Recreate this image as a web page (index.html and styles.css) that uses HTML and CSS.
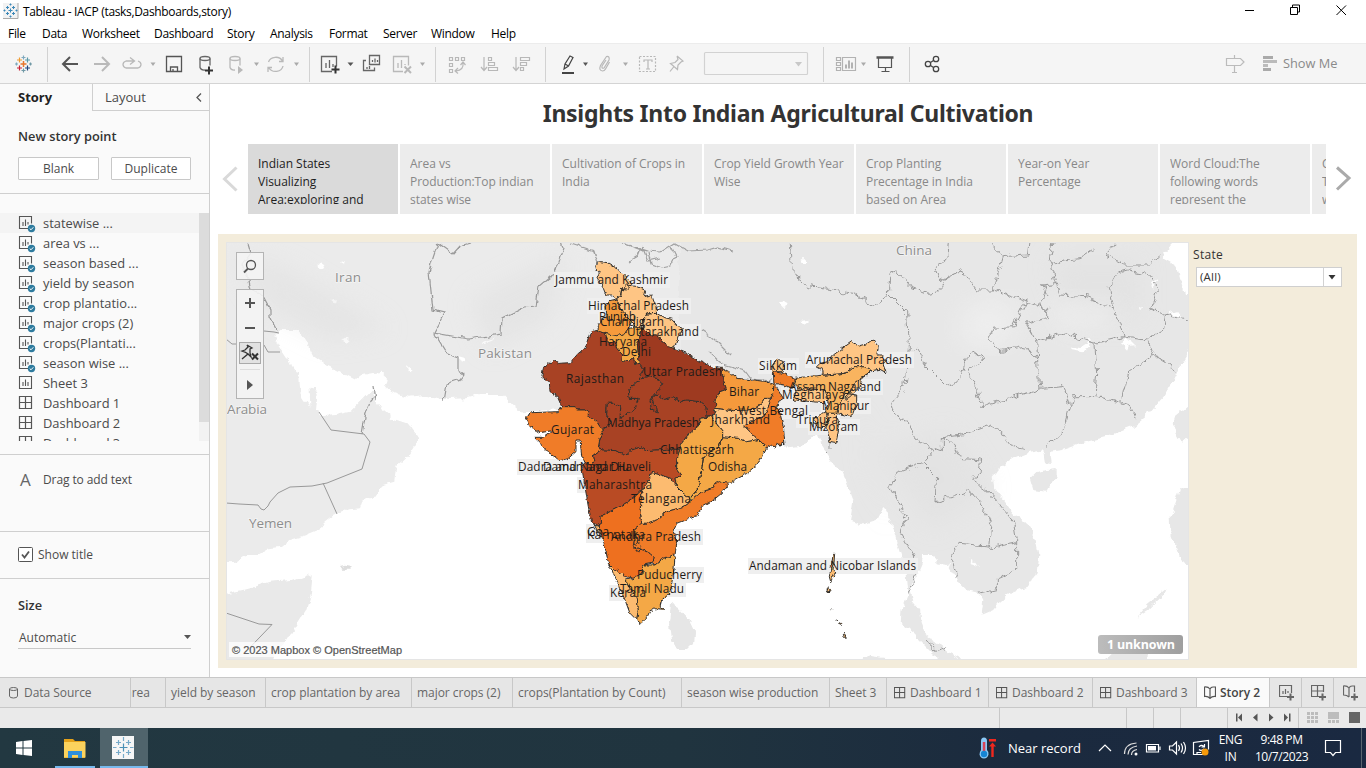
FILE: index.html
```html
<!DOCTYPE html>
<html lang="en">
<head>
<meta charset="utf-8">
<title>Tableau - IACP (tasks,Dashboards,story)</title>
<link rel="stylesheet" href="styles.css">
</head>
<body>
<svg class="defs" width="0" height="0">
  <defs>
    <symbol id="sheet" viewBox="0 0 18 18"><path d="M10 13.500H1.500V1.500h12v7M5 7v4M7.500 4.500v6.500M10 7v2.500" fill="none" stroke="#555" stroke-width="1.1"/></symbol>
    <symbol id="sheetfull" viewBox="0 0 18 18"><path d="M1.500 1.500h12v12h-12zM5 7v4M7.500 4.500v6.500M10 7v4" fill="none" stroke="#555" stroke-width="1.1"/></symbol>
    <symbol id="used" viewBox="0 0 18 18"><use href="#sheet"/><circle cx="13.500" cy="13.500" r="3.700" fill="#2e7b9e"/><path d="M11.700 13.500l1.300 1.300 2.300-2.500" fill="none" stroke="#fff"/></symbol>
    <symbol id="dash" viewBox="0 0 18 18"><path d="M1.500 1.500h12v12h-12zM7.500 1.500v12M1.500 7.500h12" fill="none" stroke="#555" stroke-width="1.2"/></symbol>
  </defs>
</svg>
<div class="app">
  <header class="titlebar">
    <svg class="app-icon" width="16" height="16" viewBox="0 0 16 16"><path d="M0 0h15v15H0z" fill="#f2f2f2"/><path d="M15 0v15.500H0" fill="none" stroke="#aaa"/><path d="M5.500 7.500h4M7.500 5.500v4M3 4.500h3M4.500 3v3M9 4.500h3M10.500 3v3M3 10.500h3M4.500 9v3M9 10.500h3M10.500 9v3M6.500 1.500h2M7.500.5v2M6.500 13.500h2M7.500 12.500v2M.5 7.500h2M1.500 6.500v2M12.500 7.500h2M13.500 6.500v2" stroke="#3c88b8"/></svg>
    <span class="win-title">Tableau - IACP (tasks,Dashboards,story)</span>
    <svg class="win-controls" width="122" height="20" viewBox="1244 0 122 20" fill="none" stroke="#000"><path d="M1245 10.500h9M1290.500 7.500h7v7h-7zM1292.500 7v-2h7v7h-2M1336.500 5.500l9.500 9.500M1346 5.500l-9.500 9.500"/></svg>
  </header>
  <nav class="menu">
    <span class="m1">File</span><span class="m2">Data</span><span class="m3">Worksheet</span><span class="m4">Dashboard</span><span class="m5">Story</span><span class="m6">Analysis</span><span class="m7">Format</span><span class="m8">Server</span><span class="m9">Window</span><span>Help</span>
  </nav>
  <div class="toolbar">
    <svg class="tgroup" width="47" height="39" viewBox="0 44 47 39" fill="none" stroke-width="1.200">
      <path d="M20.500 64h6M23.500 61v6" stroke="#e8762d" stroke-width="1.500"/><path d="M17 60h5M19.500 57.500v5" stroke="#ef9c33"/><path d="M25 60h5M27.500 57.500v5" stroke="#5c9aa8"/><path d="M17 68h5M19.500 65.500v5" stroke="#c72035"/><path d="M25 68h5M27.500 65.500v5" stroke="#1f447e"/><path d="M21.500 57.500h4M23.500 55.500v4M15 64h3M16.500 62.500v3" stroke="#7fa9be"/><path d="M21.500 70.500h4M23.500 68.500v4M29 64h3M30.500 62.500v3" stroke="#7099a6"/>
    </svg>
    <svg class="tgroup sep" width="262" height="39" viewBox="47 44 262 39" fill="none" stroke="#b9b9b9" stroke-width="1.300">
      <g stroke="#555" stroke-width="2"><path d="M78 64H63M70 57l-7 7 7 7"/></g>
      <path stroke-width="2" d="M94 64h15M102 57l7 7-7 7"/>
      <path d="M134 61h-8q-3 1-3 3.500t3 3.500h12q3-1 3-3.500t-3-3.500M130 57.500l4.500 3.500-4.500 3.500"/>
      <path d="M166.500 56.500h15v15h-15zM170.500 71v-4h7v4M173 71v-2" stroke="#555"/>
      <g stroke="#666"><ellipse cx="205" cy="58.500" rx="5" ry="2"/><path d="M200 58.500v9q1 3 5 2.500M210 58.500v7"/></g><path d="M205 70.500h8M209 66.500v8" stroke="#333" stroke-width="2"/>
      <ellipse cx="235" cy="58.500" rx="5" ry="2"/><path d="M230 58.500v9q1 3 5 2.500M240 58.500v7"/><path d="M238 66l5 4-5 4z" fill="#b9b9b9" stroke="none"/>
      <path d="M268.500 62a7.500 6.500 0 0 1 14-1M283 66a7.500 6.500 0 0 1-14 2M283 57v4.500h-4M268 72v-4.500h4"/>
      <g fill="#aaa" stroke="none"><path d="M150.500 62.500h5l-2.500 3.500zM254 62.500h5l-2.500 3.500zM294 62.500h5l-2.500 3.500z"/></g>
    </svg>
    <svg class="tgroup sep" width="126" height="39" viewBox="309 44 126 39" fill="none" stroke="#666" stroke-width="1.300">
      <path d="M332 71.500h-10.500v-15h15v10M326 63v5M329.500 60v8M333 64v3"/><path d="M331.500 69.500h8M335.500 65.500v8" stroke="#333" stroke-width="2"/><path d="M347.500 62.500h6l-3 3.500z" fill="#555" stroke="none"/>
      <path d="M369.500 55.500h10v9h-10zM366 60.500h-2.500v10h11v-3M372.500 60v2M375 58.500v4M377.500 60v2M367 67v2M369.500 66v3"/>
      <g stroke="#b9b9b9"><path d="M403 71.500h-9.500v-15h15v9M398 63v5M401.500 60v8M405 64v1"/><path d="M404.500 66.500l6.500 6.500M411 66.500l-6.500 6.500" stroke-width="2"/></g><path d="M420 62.500h5l-2.500 3.500z" fill="#aaa" stroke="none"/>
    </svg>
    <svg class="tgroup sep" width="110" height="39" viewBox="435 44 110 39" fill="none" stroke="#b8b8b8" stroke-width="1.200">
      <path d="M449.500 57.500h3v3h-3zM455.500 57.500h3v3h-3zM461.500 57.500h3v3h-3zM449.500 63.500h3v3h-3zM449.500 69.500h3v3h-3zM463 63q1 7-7 8M460.500 65l2.500-3 2.500 3M458 68l-3 3 3 2.500"/>
      <path d="M484 57v12.500M481 67l3 3.500 3-3.500M488.500 57.500h3v3h-3zM488.500 62.500h6v3h-6zM488.500 67.500h9v3h-9z"/>
      <path d="M516 57v12.500M513 67l3 3.500 3-3.500M520.500 57.500h9v3h-9zM520.500 62.500h6v3h-6zM520.500 67.500h3v3h-3z"/>
    </svg>
    <svg class="tgroup sep" width="278" height="39" viewBox="545 44 278 39" fill="none" stroke="#b8b8b8" stroke-width="1.200">
      <g stroke="#444"><path d="M564 69l1-5 5-8 3 1.500-4.500 8.500zM565 64l3.500 2"/><path d="M562 73h12" stroke-width="2"/></g><path d="M583 62.500h5l-2.500 3.500z" fill="#555" stroke="none"/>
      <path d="M606 60l-4 6q-.5 3 2 2l5-8q1-4-2.500-3.500l-6 9q-2 5 2 5.500 2 0 3-2l4-7"/><path d="M623 62.500h5l-2.500 3.500z" fill="#aaa" stroke="none"/>
      <path d="M639.500 56.500h16v15h-16z" stroke-dasharray="2 1.500"/><path d="M644 62v-2h8v2M648 60v9M646 69h4"/>
      <path d="M677 56l6 5-2 1-3 3-.5 4.500-3.500-3-4 5M674 66.500l-3.500-3 4.500-1 3-3-1-3.500"/>
      <rect x="704.500" y="52.500" width="103" height="22" rx="1" stroke="#d2d2d2"/><path d="M795 62h7l-3.500 4.500z" fill="#c8c8c8" stroke="none"/>
    </svg>
    <svg class="tgroup sep" width="86" height="39" viewBox="823 44 86 39" fill="none" stroke="#b2b2b2" stroke-width="1.200">
      <path d="M836.500 57.500h4v3h-4zM836.500 62.500h4v3h-4zM836.500 67.500h4v3h-4zM842.500 57.500h13v13h-13z"/><path d="M846 68.500v-4M849 68.500v-8M852 68.500v-6" stroke-width="2"/><path d="M861 62.500h5l-2.500 3.500z" fill="#aaa" stroke="none"/>
      <g stroke="#555"><path d="M876.500 57.500h17" stroke-width="2.500"/><path d="M878.500 58v9.500h13V58M885.500 67.500v4M881.500 71.500h8"/></g>
    </svg>
    <svg class="tgroup sep share" width="40" height="39" viewBox="909 44 40 39" fill="none" stroke="#444" stroke-width="1.300"><circle cx="928" cy="64" r="2.700"/><circle cx="936" cy="59" r="2.700"/><circle cx="936" cy="69" r="2.700"/><path d="M930.500 62.500l3-2M930.500 65.500l3 2"/></svg>
    <svg class="showicon" width="56" height="39" viewBox="1224 44 56 39" fill="none" stroke="#bbb" stroke-width="1.200"><path d="M1226.500 58.500h14l3.500 3.500-3.500 3.500h-14zM1234.500 55v3M1234.500 65.500v7M1232 72.500h5"/><g stroke="#aaa" stroke-width="3"><path d="M1263 57.500h10M1263 69.500h8"/><path stroke="#bbb" d="M1263 61.500h14M1263 65.500h5"/></g></svg>
    <span class="showme">Show Me</span>
  </div>
  <main class="work">
    <aside class="side">
      <div class="side-tabs"><b>Story</b><div class="layout-tab"><span>Layout</span><svg width="6" height="9" viewBox="0 0 6 9"><path d="M5 .5L1 4.500l4 4" fill="none" stroke="#555" stroke-width="1.300"/></svg></div></div>
      <section class="points"><h3>New story point</h3><div class="btns"><div class="btn">Blank</div><div class="btn">Duplicate</div></div></section>
      <section class="list">
        <div class="rows">
          <div class="row active"><svg><use href="#used"/></svg>statewise ...</div>
          <div class="row"><svg><use href="#used"/></svg>area vs ...</div>
          <div class="row"><svg><use href="#used"/></svg>season based ...</div>
          <div class="row"><svg><use href="#used"/></svg>yield by season</div>
          <div class="row"><svg><use href="#used"/></svg>crop plantatio...</div>
          <div class="row"><svg><use href="#used"/></svg>major crops (2)</div>
          <div class="row"><svg><use href="#used"/></svg>crops(Plantati...</div>
          <div class="row"><svg><use href="#used"/></svg>season wise ...</div>
          <div class="row"><svg><use href="#sheetfull"/></svg>Sheet 3</div>
          <div class="row"><svg><use href="#dash"/></svg>Dashboard 1</div>
          <div class="row"><svg><use href="#dash"/></svg>Dashboard 2</div>
          <div class="row"><svg><use href="#dash"/></svg>Dashboard 3</div>
        </div>
        <div class="scroll"><div class="thumb"></div></div>
      </section>
      <section class="drag"><span class="bigA">A</span><span>Drag to add text</span></section>
      <section class="show"><svg width="15" height="15" viewBox="0 0 15 15"><rect x=".5" y=".5" width="14" height="14" rx="1" fill="#fff" stroke="#555"/><path d="M4 7.500l2.500 3L11 4.500" fill="none" stroke="#555" stroke-width="1.800"/></svg><span>Show title</span></section>
      <section class="size"><h3>Size</h3><div class="select"><span>Automatic</span><svg width="7" height="4" viewBox="0 0 7 4"><path d="M0 0h7L3.500 4z" fill="#555"/></svg></div></section>
    </aside>
    <section class="story">
      <h1>Insights Into Indian Agricultural Cultivation</h1>
      <div class="nav">
        <svg class="prev" width="38" height="70" viewBox="210 144 38 70"><path d="M236.500 167.500l-12 11.500 12 11.500" fill="none" stroke="#d9d9d9" stroke-width="3"/></svg>
        <div class="cards">
          <div class="card on"><p>Indian States<br>Visualizing<br>Area:exploring and</p></div>
          <div class="card"><p>Area vs<br>Production:Top indian<br>states wise</p></div>
          <div class="card"><p>Cultivation of Crops in<br>India</p></div>
          <div class="card"><p>Crop Yield Growth Year<br>Wise</p></div>
          <div class="card"><p>Crop Planting<br>Precentage in India<br>based on Area</p></div>
          <div class="card"><p>Year-on Year<br>Percentage</p></div>
          <div class="card"><p>Word Cloud:The<br>following words<br>represent the</p></div>
          <div class="card"><p>Crop<br>Top<br>wise</p></div>
        </div>
        <svg class="next" width="40" height="70" viewBox="1326 144 40 70"><path d="M1337 167.500l12 10.500-12 11.500" fill="none" stroke="#aaa" stroke-width="3"/></svg>
      </div>
      <div class="board">
        <div class="map">
          <svg id="map" width="961" height="416" viewBox="227 243 961 416">
            <defs>
              <filter id="rough" x="-5%" y="-5%" width="110%" height="110%" color-interpolation-filters="sRGB"><feTurbulence type="fractalNoise" baseFrequency=".12" numOctaves="3" seed="4"/><feDisplacementMap in="SourceGraphic" scale="7" xChannelSelector="R" yChannelSelector="G"/></filter>
              <filter id="edge" x="-5%" y="-5%" width="110%" height="110%" color-interpolation-filters="sRGB"><feTurbulence type="fractalNoise" baseFrequency=".12" numOctaves="2" seed="9"/><feDisplacementMap in="SourceGraphic" scale="6" xChannelSelector="R" yChannelSelector="G"/></filter>
              <filter id="winding" x="-5%" y="-5%" width="110%" height="110%" color-interpolation-filters="sRGB"><feTurbulence type="fractalNoise" baseFrequency=".045" numOctaves="2" seed="9"/><feDisplacementMap in="SourceGraphic" scale="28" xChannelSelector="R" yChannelSelector="G"/></filter>
              <filter id="jagged" x="-5%" y="-5%" width="110%" height="110%" color-interpolation-filters="sRGB"><feTurbulence type="fractalNoise" baseFrequency=".08" numOctaves="2" seed="5"/><feDisplacementMap in="SourceGraphic" scale="13" xChannelSelector="R" yChannelSelector="G"/></filter>
              <filter id="soft"><feGaussianBlur stdDeviation="12"/></filter>
              <linearGradient id="badge"><stop stop-color="#bcbcbc"/><stop offset="1" stop-color="#9f9f9f"/></linearGradient>
            </defs>
            <path d="M227 243h961v416H227z" fill="#fff"/>
            <g filter="url(#rough)">
              <g transform="translate(226 240) scale(.33333)" fill="#ebebeb">
                <path d="M-30-30V970L30 965 60 945 95 945 130 925 165 920 190 900 240 885 290 865 298 845 320 828 370 808 405 805 415 775 455 765 470 735 505 725 510 680 530 665 550 645 580 595 545 550 500 535 470 510 450 480 440 450 425 465 400 490 375 515 330 525 290 528 270 510 275 460 262 442 248 450 250 500 235 480 222 445 220 410 190 365 160 320 145 290 160 270 215 270 240 300 265 350 300 375 350 400 390 420 410 405 465 395 485 415 480 435 495 455 545 470 600 465 650 478 720 475 760 465 830 465 860 495 890 520 1000 510 1300 600H1660V-30z"/>
                <path d="M-10 1062L50 1050 70 1045 130 1025 200 1020 245 1003 260 1012 255 1060 240 1110 215 1150 185 1200 150 1235 130 1290H-10z" fill="#e9e9e9"/>
                <path d="M342 978l15-4 21 4-8 8-22 0z" fill="#ddd"/>
                <path d="M275 70l10-6 12 8-8 14-14-4zM345 70l14-4-2 10zM316 180l10-4-2 12zM345 297l14-4 12 12-8 2zM540 380l14-3 2 14-10 4zM695 345l22 6-4 10-12-3zM765 310l40-18-10 12-28 8z" fill="#fff"/>
              </g>
              <g transform="translate(780 240) scale(.33333)" fill="#e7e7e7">
                <path d="M-300-30V560L15 620 60 615 95 600 110 585 120 610 140 640 160 670 190 700 205 740 220 780 210 845 240 855 290 840 310 800 330 840 345 890 360 940 380 1000 385 1060 365 1110 362 1150 400 1180 430 1210 470 1250 480 1280H545L545 1258 510 1240 480 1215 440 1190 425 1150 420 1110 395 1080 390 1050 412 1000 425 970 430 945 460 945 470 970 505 975 520 1000 540 1030 560 1050 600 1060 610 1080 605 1125 640 1110 660 1085 690 1060 740 1040 770 1000 775 940 765 890 740 850 700 820 670 780 640 740 635 710 660 680 700 655 740 640 790 630 795 670 815 672 810 635 850 630 920 605 980 590 1060 560 1110 520 1150 470 1180 420 1195 390 1220 350 1240 290V165H1215L1200 115 1190 80 1145 55 1180 10 1190-30z"/>
                <path d="M750 715L770 695 830 687 830 715 800 755 760 750zM1180 560L1185 530 1240 485V590L1205 605zM1175 890L1172 830 1200 745H1240V985L1200 960zM1070 1130L1100 1095 1160 1045 1155 1060 1110 1105zM950 1290L1030 1205 1060 1195 1100 1200V1290zM245 1270L250 1245 320 1255 350 1290z"/>
                <path d="M0 190l18-4 8 8-16 10zM62 240l24-4-8 12-14 4zM62 58h16v8H64zM870 320l34 4 20-12-8-18 16 10 2 18-24 12-34-6zM1020 310l20-20 26 26-20 2-6 14-10-14zM1115 125l12-10 2 18-10 10zM1070 205l20-4-6 10zM1172 220l18-6 10 14-14 4zM565 955l22 14 10 14-14-6z" fill="#fff"/>
              </g>
              <path d="M671 603L678 607 688 618 695 633 694 643 687 650 677 650 671 640 669 623z" fill="#e6e6e6"/>
            </g>
            <g fill="#dfdfdf" opacity=".5" filter="url(#soft)"><path d="M1050 260h90v60h-70zM880 450l70-20 40 60-60 40zM860 390l20 100 10 40-20-60zM470 300l60-30 40-20-20 70-60 30zM230 250l60 20 100 60-60 10-60-30z"/></g>
            <g fill="#f4f4f4" opacity=".5" filter="url(#soft)"><path d="M960 310l40-15 20 25-20 30-40-5zM1050 300l70 5-10 20-50 5z"/></g>
            <g fill="none" stroke="#999" stroke-width="1">
              <path d="M226 503l13 1 19 1 3 4 3 1 4-4 2-4 8-9 12-6 22-1 15-3 35-14 8-27-6-8-33-4-12-18M323 483l14 31M226 613l33 11 13 .5-24 25M226 339l6 5h5M264 331l10 1 5 1M264 345l4 7h12"/>
              <g filter="url(#edge)" stroke-width="1.200"><path d="M248 243l3 10-9 12 7 16 2 9 12 6 7 13v8l7 14M438 243l-5 15-4 14 4 38 12 3-11 20 34 6 33-5 1-16 22-11 12-1 3-20 12-10 7-13 5-15-4-15M434 334l11 18 13 5v14l6 4-3 4-15 5-3 17M438 243l15 11 7-8 10-3M374 386l2 14M362 434l3-17 5-16 6-6"/>
              <path d="M622 243l22 8 4 10 12-3M622 243l25 8 13 1 14-9 14 8 20-1 10-3 14 4M648 252l3 12 11 4 9-2 5-10-5-10M709 352l14 13 22 6 6 8 20 2M701 330l12 8 18 18M570 243l24 8 4 14-3 4M628 262l10-6 4-10" stroke="#a0a0a0"/></g>
            </g>
            <g transform="translate(780 240) scale(.33333)" fill="none" stroke="#999" stroke-width="3" filter="url(#winding)">
              <path d="M30 0L40 100 90 140 220 160 280 200 325 160 380 215 385 320 375 440 335 490 345 525 380 540 405 600 465 630 490 635 490 590 560 580 630 555 660 570 690 615 730 625M325 160L330 100 350 90 390 140 440 160 480 155 500 110 545 90 590 150 640 150 670 50 625 5M640 150L720 175 800 205 800 235 740 250 770 300 775 400 780 445 690 475 605 500 590 440 565 390 615 360 580 335 560 350 545 400 530 430 500 440 440 380 410 325 390 330M740 180L700 260 640 265 625 295 660 335 720 320 770 350M670 50L745 45 750 5M820 0L810 70 840 165 920 170 1000 205 1025 270 1030 290 945 310 860 280 770 300M810 70L900 55 935 30M1000 205L985 145 1010 100 1045 90 1110 105 1135 150 1115 210 1155 225 1225 240M945 310L950 400 945 470 880 470 870 500 850 440 780 445M870 500L850 575 795 625M1025 290L1100 300 1120 345 1045 400 1025 490 945 470M1025 490L1050 500 1070 545M1120 345L1190 390M1100 300L1150 270 1160 225M1035 75L1110 75 1145 45M1035 75L980 45 1010 0M465 630L430 670 350 700 330 745 380 835 360 880 400 950 410 1010 380 1060M490 590L525 620 540 655 605 660 600 700 575 715 640 770 700 845 710 905 640 920 540 910 515 945 535 1015M430 670L470 710 465 785 520 770 570 755 605 790 635 860 630 915M710 905L710 990 655 1015 655 1045 595 1060M430 1200L470 1230 505 1220M150 570L150 630 135 645M505 0L500 60 465 85 480 125 545 90M785 135L800 140 785 200M785 135L840 130"/>
            </g>
            <g id="plates"></g>
            <g id="states" transform="translate(500 240) scale(.33333)" stroke="#33302c" stroke-width="3" stroke-linejoin="round" filter="url(#jagged)">
              <path fill="#fec584" d="M287 77L300 65 322 68 345 82 365 98 385 115 395 133 380 150 365 148 362 165 350 177 335 165 318 165 310 145 298 125 290 110 300 97 290 90zM365 148L380 135 410 140 435 150 430 170 455 165 460 180 468 200 470 220 440 222 432 240 425 262 410 260 395 245 375 225 360 205 350 177 362 165zM432 240L440 222 470 220 490 232 515 238 530 255 550 265 535 290 522 325 505 320 480 300 470 285 450 285 430 265z"/>
              <path fill="#f59a3c" d="M350 177L360 205 375 225 395 245 385 265 375 280 350 287 315 280 288 272 300 250 318 230 315 200 330 182z"/>
              <path fill="#f4a846" d="M315 280L350 287 375 280 385 265 410 262 425 262 418 290 412 310 415 340 418 370 405 372 400 355 385 365 365 362 368 345 350 325 345 305 325 305z"/>
              <path fill="#a84224" d="M270 278L288 272 315 280 325 305 345 305 350 325 368 345 365 362 385 365 400 355 405 372 418 370 428 388 422 402 430 412 405 430 385 455 388 475 415 475 405 510 385 520 360 535 362 500 345 490 322 490 320 525 335 545 318 560 305 568 290 545 265 525 262 510 230 510 225 500 185 500 170 465 150 455 148 425 125 412 130 385 160 360 175 370 210 368 235 340 255 325z"/>
              <path fill="#a84224" d="M430 412L450 408 470 412 485 430 480 445 465 460 450 480 455 510 472 518 470 505 460 490 455 470 475 465 490 478 520 470 540 485 560 480 600 485 618 500 622 530 600 535 598 555 575 575 560 590 545 610 540 628 500 628 440 632 420 622 395 630 380 645 345 632 310 630 295 622 300 595 308 580 305 568 318 560 335 545 320 525 322 490 345 490 362 500 360 535 385 520 405 510 415 475 388 475 385 455 405 430z"/>
              <path fill="#9e3a20" d="M425 262L430 265 450 285 470 285 480 300 505 320 522 325 560 340 600 365 640 382 665 385 670 420 680 448 660 455 645 480 648 505 635 530 622 530 618 500 600 485 560 480 540 485 520 470 490 478 475 465 455 470 460 490 470 505 472 518 455 510 450 480 465 460 480 445 485 430 470 412 450 408 430 412 422 402 428 388 418 370 415 340 412 310 418 290z"/>
              <path fill="#f07c28" d="M75 532L95 518 175 515 185 500 225 500 230 510 262 510 265 525 290 545 305 568 308 580 300 595 295 622 300 632 280 645 285 665 270 672 255 668 245 645 240 600 228 600 228 635 205 655 180 662 150 640 120 610 103 592 130 592 158 572 120 578 90 560z"/>
              <path fill="#b94b24" d="M295 622L310 630 345 632 380 645 395 630 420 622 440 632 500 628 540 628 530 660 530 685 545 705 525 715 530 740 512 715 480 705 455 697 445 725 425 750 400 775 360 800 330 815 303 828 305 850 292 857 275 845 265 800 255 740 245 680 255 668 270 672 285 665 280 645 300 632z"/>
              <path fill="#fcbb70" d="M455 697L480 705 512 715 530 740 550 760 575 780 560 795 535 805 500 815 470 840 440 850 425 850 420 810 425 780 425 750 445 725zM325 970L340 985 380 1010 378 1020 390 1045 412 1075 415 1110 410 1140 390 1120 375 1080 350 1020zM283 855L298 860 302 882 292 872z"/>
              <path fill="#ee701f" d="M303 828L330 815 360 800 400 775 425 750 425 780 420 810 425 850 405 865 405 890 400 920 430 930 450 940 465 955 455 970 430 975 425 1000 400 1015 380 1010 340 985 325 970 318 930 302 882 298 860 292 857 305 850z"/>
              <path fill="#f07c28" d="M405 865L425 850 440 850 470 840 500 815 535 805 560 795 575 780 605 755 640 745 650 725 690 725 665 760 640 780 605 800 590 830 560 838 530 850 520 875 530 910 525 945 490 955 465 975 455 970 465 955 450 940 430 930 400 920 405 890z"/>
              <path fill="none" d="M402 915l12-8 8 12-6 16-14-8zM404 890l10 4-2 12"/>
              <path fill="#f4a846" d="M525 945L522 990 510 1060 485 1080 480 1100 494 1108 468 1106 450 1112 440 1135 422 1150 410 1140 415 1110 412 1075 390 1045 378 1020 400 1015 425 1000 430 975 465 975 490 955zM598 555L600 535 635 530 645 545 668 575 668 590 655 625 630 635 610 655 605 690 600 710 595 745 570 775 550 760 530 740 525 715 545 705 530 685 530 660 540 628 545 610 560 590 575 575zM668 590L690 592 715 595 740 605 775 598 800 622 780 660 770 675 740 700 690 730 650 725 640 745 605 755 575 780 570 775 595 745 600 710 605 690 610 655 630 635 655 625z"/>
              <path fill="#fec584" d="M648 505L670 508 700 512 740 510 760 508 785 490 795 475 812 480 805 505 790 530 755 545 735 560 765 590 775 598 740 605 715 595 690 592 668 590 668 575 645 545 635 530zM820 370L835 358 850 365 850 395 818 395z"/>
              <path fill="#f59a3c" d="M665 385L690 398 710 415 760 420 800 425 822 435 825 455 812 475 795 475 785 490 760 508 700 512 670 508 648 505 645 480 660 455 680 448 670 420z"/>
              <path fill="#f07c28" d="M820 395L850 400 885 415 885 430 880 445 850 435 825 430 835 450 850 475 835 485 830 500 840 520 850 560 855 615 845 605 840 622 832 608 825 625 820 615 800 622 775 598 765 590 735 560 755 545 790 530 805 505 812 475 820 455 822 435z"/>
              <path fill="#f9b45f" d="M885 415L920 410 1000 403 1035 400 1060 380 1095 380 1115 392 1090 410 1065 430 1050 455 1035 480 1010 520 975 520 985 490 975 450 930 447 890 447z"/>
              <path fill="#fec584" d="M890 447L930 447 975 450 985 478 970 488 880 480zM950 380L960 370 985 365 1000 345 1055 305 1075 318 1105 310 1120 300 1135 320 1130 345 1145 345 1160 365 1150 375 1158 398 1140 388 1115 392 1095 380 1060 380 1035 400 1000 403 970 405 968 390zM1065 430L1090 410 1115 392 1085 415 1080 440 1060 460 1050 470 1035 480zM1035 460L1070 465 1070 490 1055 530 1010 520 1015 500zM985 520L1010 520 1018 560 1008 608 990 605 980 560zM940 540L965 520 978 515 985 545 965 565 950 560z"/>
              <path fill="#fcbb70" d="M1000 940l4 0-3 40 3 20-12 25-4-15 6-30zM981 1046l6-2 3 8-7 4zM993 1107h2v2h-2zM1008 1140h2v2h-2zM1018 1152l8-4-1 8zM1030 1180l6 4 2 12-6-6z"/>
            </g>
            <g class="country"><text x="335" y="282" textLength="26">Iran</text><text x="478" y="358" textLength="54">Pakistan</text><text x="227" y="414" textLength="40">Arabia</text><text x="249" y="528" textLength="43">Yemen</text><text x="896" y="255" textLength="36">China</text></g>
            <g id="labels"></g>
            <rect x="229" y="642" width="176" height="15" fill="#fff" opacity=".75"/><text class="attrib" x="232" y="654" textLength="170">© 2023 Mapbox © OpenStreetMap</text>
            <rect x="1098" y="635" width="85" height="19" rx="3" fill="url(#badge)"/><text class="unknown" x="1107" y="649" textLength="68">1 unknown</text>
          </svg>
          <svg class="controls" width="28" height="147" viewBox="236 252 28 147" fill="none"><rect x="236.500" y="252.500" width="27" height="27" fill="#f4f4f4" fill-opacity=".9" stroke="#b4b4b4"/><circle cx="251" cy="265" r="4.500" stroke="#555" stroke-width="1.300"/><path d="M248 268.500l-4 4" stroke="#555" stroke-width="1.800"/><rect x="236.500" y="289.500" width="27" height="109" fill="#f4f4f4" fill-opacity=".9" stroke="#b4b4b4"/><path d="M245 303h10M250 298v10M245 328h10" stroke="#555" stroke-width="2"/><rect x="239.500" y="342.500" width="21" height="21" fill="#e2e2e2" stroke="#aaa"/><path d="M247 345l5 3-2 1v4l1 4-3-3-6 5M247 353l-5-2 3-1 3-3-1-2M248 354l-3-2" stroke="#333" stroke-width="1.300"/><path d="M252 353.500l6 6M258 353.500l-6 6" stroke="#333" stroke-width="2"/><path d="M240 369.500h20" stroke="#ddd"/><path d="M247 380v10l6-5z" fill="#555"/></svg>
        </div>
        <div class="filter"><span>State</span><div class="combo"><span>(All)</span><svg width="18" height="18" viewBox="0 0 18 18"><path d="M.5 0v18" stroke="#d2d2d2"/><path d="M5.500 7h7L9 11.500z" fill="#333"/></svg></div></div>
      </div>
    </section>
  </main>
  <div class="sheets">
    <div class="tab ds"><svg width="9" height="12" viewBox="0 0 9 12"><path d="M.5 2v7q0 2 4 2t4-2V2q0-1.500-4-1.500T.5 2zM.5 2q0 1.500 4 1.500t4-1.500" fill="none" stroke="#666"/></svg><span>Data Source</span></div>
    <div class="tab cut"><span>area</span></div>
    <div class="tab t1"><span>yield by season</span></div><div class="tab t2"><span>crop plantation by area</span></div><div class="tab t3"><span>major crops (2)</span></div><div class="tab t4"><span>crops(Plantation by Count)</span></div><div class="tab t5"><span>season wise production</span></div><div class="tab t6"><span>Sheet 3</span></div>
    <div class="tab d1"><svg class="dsh" viewBox="1 1 14 14"><use href="#dash" width="18" height="18"/></svg><span>Dashboard 1</span></div><div class="tab d2"><svg class="dsh" viewBox="1 1 14 14"><use href="#dash" width="18" height="18"/></svg><span>Dashboard 2</span></div><div class="tab d2"><svg class="dsh" viewBox="1 1 14 14"><use href="#dash" width="18" height="18"/></svg><span>Dashboard 3</span></div>
    <div class="tab st"><svg width="12" height="13" viewBox="0 0 12 13"><path d="M6 3v9.500M6 3Q4 .5.500 1v9.500Q4 10 6 12.500 8 10 11.500 10.500V1H9M6 3q1-2 3-2" fill="none" stroke="#555" stroke-width="1.200"/></svg><span>Story 2</span></div>
    <div class="tab add"><svg width="16" height="16" viewBox="0 0 16 16" fill="none" stroke="#666" stroke-width="1.200"><path d="M9 11.500H.5v-11h12V8M4 6v3M6.500 4v5M9 6v2"/><path d="M8 12h7M11.500 8.500v7" stroke-width="2"/></svg></div>
    <div class="tab add"><svg width="16" height="16" viewBox="0 0 16 16" fill="none" stroke="#666" stroke-width="1.200"><path d="M8 11.500H.5v-11h12V7M6.500.5v11M.5 6h12"/><path d="M8 12h7M11.500 8.500v7" stroke-width="2"/></svg></div>
    <div class="tab add"><svg width="16" height="16" viewBox="0 0 16 16" fill="none" stroke="#666" stroke-width="1.200"><path d="M6 3v9M6 3Q4 .5.500 1v9Q4 10 6 12M11.500 7V1H9Q7 1 6 3"/><path d="M8 12h7M11.500 8.500v7" stroke-width="2"/></svg></div>
  </div>
  <div class="status"><svg width="367" height="20" viewBox="999 708 367 20"><path d="M999.500 708v20M1126.500 708v20M1153.500 708v20M1180.500 708v20M1227.500 708v20M1298.500 708v20" stroke="#c8c8c8"/><path d="M1236 713.500h1.500v8h-1.500zM1242 713.500v8l-4-4zM1257.500 713.500v8l-4.500-4zM1269 713.500v8l4.500-4zM1284 713.500v8l4-4zM1289 713.500h1.500v8H1289z" fill="#555"/><path d="M1307 712h3v3h-3zM1311 712h3v3h-3zM1315 712h3v3h-3zM1307 716h3v3h-3zM1311 716h3v3h-3zM1315 716h3v3h-3zM1307 720h3v3h-3zM1311 720h3v3h-3zM1315 720h3v3h-3zM1328 712h11v7h-11zM1328 720h3v3h-3zM1332 720h3v3h-3zM1336 720h3v3h-3z" fill="#bcbcbc"/><path d="M1349 712h11v11h-11z" fill="#666"/></svg></div>
  <footer class="taskbar">
    <svg width="148" height="40" viewBox="0 728 148 40"><path d="M16 742l6.500-1v6.500H16zM23.500 741l8.500-1v7.500h-8.500zM16 748.500h6.500v6.500L16 754zM23.500 748.500H32v7.500l-8.500-1z" fill="#fff"/><path d="M64 739h9l2 2h10v17H64z" fill="#e5a21a"/><path d="M64 742h21.500v15.500H64z" fill="#fbd25d"/><path d="M68 758v-7h14v7h-4v-3h-6v3z" fill="#2f8fdc"/><path d="M100 728h48v40h-48z" fill="#50646c"/><path d="M112 736h22v23h-22z" fill="#f6f6f6"/><g stroke="#4b91b6" stroke-width="1.200"><path d="M119.500 747.500h8M123.500 743.500v8"/><path stroke="#76aac9" d="M116 742.500h5M118.500 740v5M126 742.500h5M128.500 740v5M116 752.500h5M118.500 750v5M126 752.500h5M128.500 750v5M123.500 737v4M123.500 754v4M113 747.500h3.500M130 747.500h3.500"/></g><path d="M55 766h40v2H55zM100 766h48v2h-48z" fill="#76b9ed"/></svg>
    <div class="weather"><svg width="20" height="24" viewBox="980 736 20 24"><path d="M982 741q0-3.500 3-3.500t3 3.500v9q2 2 1.500 4.500-1 4-4.500 4t-4.500-4q0-2.500 1.500-4.500z" fill="#8cc8f5"/><path d="M983.800 742h2.500v9h-2.500z" fill="#d94458"/><circle cx="985" cy="754" r="3.200" fill="#1684d4"/><path d="M990 739h7v2.500h-7zM990 746.500l3.500-4 3.500 4h-2.300V757h-2.400v-10.500z" fill="#f0281e"/></svg><span>Near record</span></div>
    <svg class="tray" width="114" height="24" viewBox="1098 736 114 24" fill="none" stroke="#fff" stroke-width="1.200"><path d="M1099 751l6-6 6 6"/><path d="M1124.500 754q0-10 12-11M1128 754.500q0-7 9-8.500M1131.500 755q0-4.500 5.500-5.500" stroke="#ddd"/><circle cx="1136" cy="754" r="1.500" fill="#fff" stroke="none"/><path d="M1146.500 744.500h12v7.500h-12zM1160 746.500v3.500"/><path d="M1148 746h8v4.500h-8z" fill="#fff" stroke="none"/><path d="M1169.500 746h3l4-4v12l-4-4h-3zM1178.500 745q2 3 0 6M1181 743.500q3 4.500 0 9M1183.500 742q4 6 0 12"/><path d="M1203 754.500h-9.500v-12l15-2v9M1197 755v-2.500h4M1199 747q2-3 5-.5M1204.500 744v3h-3M1204 749q-3 2.500-5 .5"/><circle cx="1205" cy="752" r="3.500" fill="#f59a0b" stroke="none"/></svg>
    <div class="stack lang"><span>ENG</span><span>IN</span></div>
    <div class="stack clock"><span>9:48 PM</span><span>10/7/2023</span></div>
    <svg class="note" width="42" height="40" viewBox="1324 728 42 40"><path d="M1325.500 740.500h15v12h-5l-2.500 3-2.500-3h-5z" fill="none" stroke="#fff" stroke-width="1.200"/><path d="M1361.500 728v40" stroke="#59656f"/></svg>
  </footer>
</div>
<script src="labels.js"></script>
</body>
</html>
```
FILE: styles.css
```css
* { box-sizing: border-box; }
body { margin: 0; font-family: "Open Sans", "Noto Sans", sans-serif; font-size: 12px; color: #4b4b4b; overflow: hidden; }
h1, h3, p { margin: 0; }
svg { display: block; flex: none; }
span { white-space: nowrap; }
.defs { position: absolute; }
.app { width: 1366px; height: 768px; display: flex; flex-direction: column; background: #fff; }
.titlebar { height: 22px; display: flex; align-items: center; padding-left: 3px; color: #000; }
.win-title { margin-left: 4px; padding-top: 1px; font-size: 12px; letter-spacing: -.34px; flex: 1; }
.win-controls { align-self: flex-start; }
.menu { height: 21px; padding: 2px 0 0 8px; display: flex; align-items: center; color: #000; font-size: 12px; letter-spacing: -.3px; }
.m1 { width: 34px; } .m2 { width: 40px; } .m3 { width: 72px; } .m4 { width: 73px; } .m5 { width: 43px; } .m6 { width: 59px; } .m7 { width: 54px; } .m8 { width: 48px; } .m9 { width: 60px; }
.toolbar { height: 41px; background: #f5f5f5; border-top: 1px solid #ececec; border-bottom: 1px solid #d4d4d4; display: flex; align-items: center; }
.sep { background: linear-gradient(#d2d2d2, #d2d2d2) no-repeat 0 3px / 1px 35px; }
.showicon { margin-left: auto; }
.showme { width: 86px; padding: 0 0 2px 3px; font-size: 12.8px; color: #8a8a8a; }
.work { height: 593px; display: flex; }
.side { width: 210px; background: #fafafa; border-right: 1px solid #cfcfcf; display: flex; flex-direction: column; }
.side h3 { font-size: 12.8px; font-weight: 600; color: #333; line-height: 18px; }
.side-tabs { height: 27px; display: flex; font-size: 13px; line-height: 26px; }
.side-tabs b { width: 92px; padding-left: 18px; color: #222; }
.layout-tab { flex: 1; display: flex; justify-content: space-between; align-items: center; padding: 0 7px 0 12px; border-left: 1px solid #cfcfcf; border-bottom: 1px solid #cfcfcf; }
.points { height: 83px; padding: 16px 18px 0; border-bottom: 1px solid #cfcfcf; }
.btns { display: flex; gap: 12px; margin-top: 12px; }
.btn { width: 81px; height: 23px; border: 1px solid #c8c8c8; border-radius: 1px; background: #fff; text-align: center; line-height: 21px; font-size: 12px; }
.btns .btn + .btn { width: 80px; }
.list { height: 261px; padding: 19px 0 13px; border-bottom: 1px solid #cfcfcf; display: flex; font-size: 12.9px; }
.rows { width: 199px; overflow: hidden; }
.row { height: 20px; line-height: 20px; padding-left: 18px; display: flex; align-items: center; gap: 7px; white-space: nowrap; }
.row svg { width: 18px; height: 18px; margin-top: 2px; }
.active { background: #f4f4f4; }
.scroll { width: 10px; background: #f2f2f2; }
.thumb { height: 209px; background: #dcdcdc; }
.drag { height: 77px; border-bottom: 1px solid #cfcfcf; display: flex; gap: 13px; padding: 16px 0 0 20px; line-height: 18px; letter-spacing: -.1px; }
.bigA { font-size: 17px; color: #666; width: 10px; }
.show { height: 47px; border-bottom: 1px solid #cfcfcf; display: flex; align-items: center; gap: 5px; padding: 0 0 2px 18px; }
.size { padding: 17px 18px 0; }
.select { margin-top: 12px; height: 23px; border-bottom: 1px solid #c8c8c8; display: flex; align-items: center; justify-content: space-between; padding-left: 1px; }
.story { flex: 1; display: flex; flex-direction: column; min-width: 0; }
.story h1 { height: 60px; line-height: 58px; font-size: 23px; font-weight: 700; font-family: "Noto Sans", sans-serif; color: #333; text-align: center; white-space: nowrap; letter-spacing: -.27px; }
.nav { display: flex; height: 70px; }
.cards { width: 1078px; display: flex; gap: 2px; overflow: hidden; }
.card { flex: none; width: 150px; height: 70px; background: #ececec; color: #888; padding: 11px 0 0 10px; font-size: 12px; }
.card p { line-height: 18px; height: 49px; overflow: hidden; white-space: nowrap; letter-spacing: -.02px; }
.on { background: #dadada; color: #1d1d1d; }
.board { margin: 20px 9px 0 8px; height: 434px; background: #f3ecdb; padding: 8px; display: flex; }
.map { width: 963px; height: 418px; border: 1px solid #e5e5e5; position: relative; }
.controls { position: absolute; left: 9px; top: 9px; }
.filter { padding: 4px 0 0 4px; width: 156px; color: #333; }
.filter > span { display: block; line-height: 18px; letter-spacing: .3px; }
.combo { margin: 3px 0 0 3px; width: 146px; height: 20px; border: 1px solid #cfcfcf; background: #fff; display: flex; justify-content: space-between; padding-left: 3px; line-height: 18px; font-size: 11.5px; letter-spacing: .2px; }
.sheets { height: 31px; border-top: 1px solid #c8c8c8; border-bottom: 1px solid #c8c8c8; background: #e6e6e6; display: flex; color: #666; letter-spacing: -.04px; }
.tab { border-right: 1px solid #c8c8c8; display: flex; align-items: center; padding-left: 5px; flex: none; overflow: hidden; }
.ds { width: 131px; padding-left: 9px; gap: 6px; }
.cut { width: 35px; padding-left: 0; } .cut span { margin-left: -6px; }
.t1 { width: 100px; } .t2 { width: 146px; } .t3 { width: 101px; } .t4 { width: 169px; } .t5 { width: 148px; } .t6 { width: 57px; }
.d1 { width: 102px; padding-left: 7px; } .d2 { width: 104px; padding-left: 7px; }
.dsh { width: 12px; height: 12px; margin-right: 4px; }
.st { width: 73px; padding-left: 7px; gap: 4px; background: #fafafa; font-weight: 600; color: #444; }
.add { width: 32px; padding-left: 9px; } .add:last-child { width: 33px; border: 0; }
.status { height: 20px; background: #eaeaea; display: flex; justify-content: flex-end; }
.taskbar { height: 40px; background: linear-gradient(90deg, #223841, #20343f 50%, #1b2a3e 75%, #1a2941); display: flex; align-items: center; color: #fff; }
.weather { margin-left: 831px; display: flex; align-items: center; gap: 9px; width: 119px; font-size: 13px; }
.stack { display: flex; flex-direction: column; align-items: center; line-height: 17px; font-size: 12px; }
.lang { width: 37px; letter-spacing: -.3px; } .clock { width: 65px; margin-right: 10px; letter-spacing: -.4px; }
#map text { font-family: "Open Sans", "Noto Sans", sans-serif; }
#labels { font-size: 11.8px; fill: #1e1a18; }
#plates { fill: #efefef; }
.country { font-size: 13.5px; fill: #8e8e8e; stroke: #f4f4f4; stroke-width: 1.5px; paint-order: stroke; }
#map .attrib { font: 11px "Liberation Sans", sans-serif; fill: #555; stroke: #555; stroke-width: .2px; }
.unknown { font-size: 12.5px; font-weight: 700; fill: #fff; }
```
FILE: labels.js
```javascript
// [name, left, right, vertical centre]
const names = [
  ["Jammu and Kashmir", 555, 668, 280], ["Himachal Pradesh", 588, 689, 306], ["Punjab", 599, 636, 317],
  ["Chandigarh", 600, 664, 322], ["Uttarakhand", 627, 699, 332], ["Haryana", 599, 647, 342], ["Delhi", 622, 651, 352],
  ["Uttar Pradesh", 643, 722, 372], ["Rajasthan", 566, 624, 379], ["Madhya Pradesh", 607, 699, 423], ["Gujarat", 551, 594, 430],
  ["Sikkim", 759, 797, 366], ["Arunachal Pradesh", 806, 912, 360], ["Bihar", 729, 759, 392], ["Assam", 789, 826, 387],
  ["Nagaland", 828, 881, 387], ["Meghalaya", 782, 845, 395], ["West Bengal", 738, 808, 411], ["Manipur", 822, 869, 406],
  ["Jharkhand", 711, 770, 420], ["Tripura", 797, 838, 420], ["Mizoram", 809, 858, 427], ["Chhattisgarh", 660, 734, 450],
  ["Odisha", 708, 747, 467], ["Dadra and Nagar Haveli", 518, 651, 467], ["Daman and Diu", 543, 629, 467],
  ["Maharashtra", 578, 652, 485], ["Telangana", 631, 691, 499], ["Goa", 587, 609, 532], ["Karnataka", 587, 645, 535],
  ["Andhra Pradesh", 611, 701, 537], ["Puducherry", 637, 702, 575], ["Tamil Nadu", 620, 684, 589], ["Kerala", 610, 646, 593],
  ["Andaman and Nicobar Islands", 749, 916, 566]
];
const ns = "http://www.w3.org/2000/svg";
for (const [name, x1, x2, y] of names) {
  const plate = document.createElementNS(ns, "rect");
  plate.setAttribute("x", x1 - 1);
  plate.setAttribute("y", y - 8);
  plate.setAttribute("width", x2 - x1 + 3);
  plate.setAttribute("height", 16);
  document.getElementById("plates").append(plate);
  const label = document.createElementNS(ns, "text");
  label.setAttribute("x", x1);
  label.setAttribute("y", y + 4);
  label.setAttribute("textLength", x2 - x1);
  label.textContent = name;
  document.getElementById("labels").append(label);
}
```
